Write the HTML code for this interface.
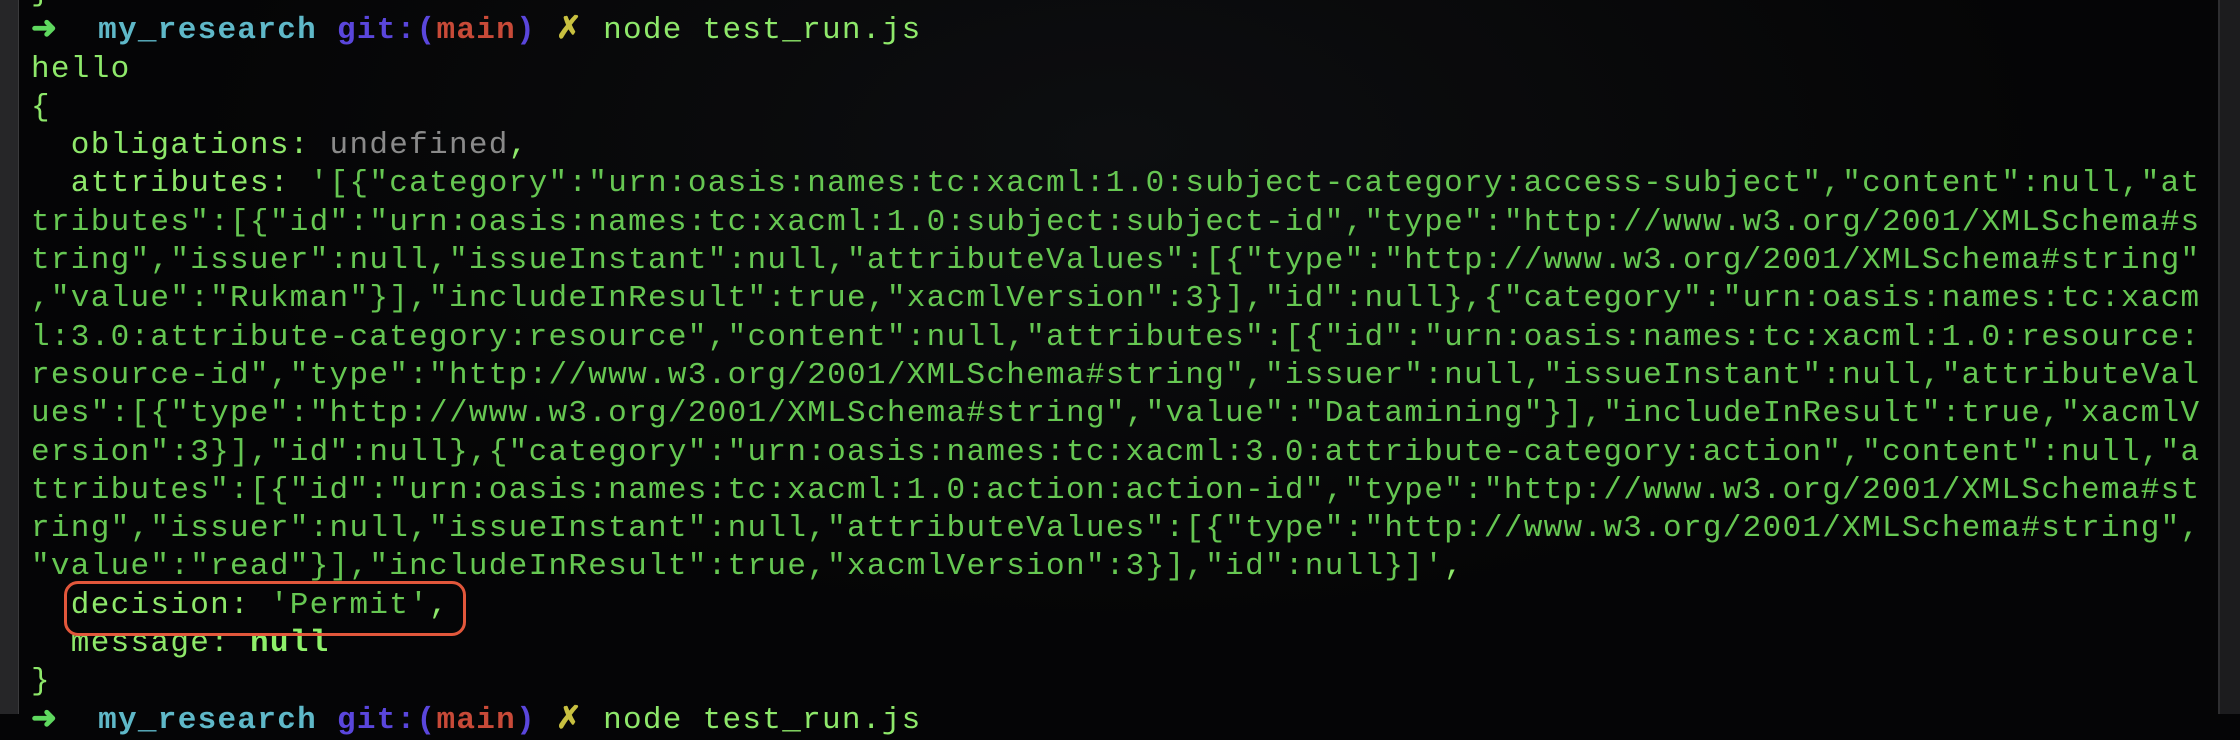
<!DOCTYPE html>
<html><head><meta charset="utf-8"><style>
html,body{margin:0;padding:0;width:2240px;height:714px;overflow:hidden;background:#050506;}
.lstrip{position:absolute;left:0;top:0;width:18px;height:714px;background:#262628;border-right:1px solid #3a3a3c;}
.rstrip{position:absolute;left:2218px;top:0;width:22px;height:714px;background:#1c1c1e;border-left:2px solid #2e2e30;}
.term{position:absolute;left:19px;top:0;width:2199px;height:714px;background:radial-gradient(ellipse at 50% 20%,#0d0e10 0%,#050506 60%);}
pre{position:absolute;left:31px;top:-26px;margin:0;font-family:"Liberation Mono",monospace;font-size:31px;letter-spacing:1.3px;line-height:38.3px;color:#8ee86a;white-space:pre;}
.g{color:#66c752}.u{color:#8a8a8a}.n{color:#8ef06a;font-weight:bold}
.ar{color:#5fd85f;font-weight:bold}.c{color:#5fb8c8;font-weight:bold}.b{color:#5a46dc;font-weight:bold}.r{color:#c84a38;font-weight:bold}.y{color:#c8c040;font-weight:bold}
.box{position:absolute;left:64px;top:581px;width:396px;height:49px;border:3px solid #e2573b;border-radius:14px;}
</style></head><body>
<div class="term"></div>
<div class="lstrip"></div>
<div class="rstrip"></div>
<pre>}
<span class="ar">➜</span>  <span class="c">my_research</span> <span class="b">git:(</span><span class="r">main</span><span class="b">)</span> <span class="y">✗</span> node test_run.js
hello
{
  obligations: <span class="u">undefined</span>,
  attributes: <span class="g">'[{"category":"urn:oasis:names:tc:xacml:1.0:subject-category:access-subject","content":null,"at</span>
<span class="g">tributes":[{"id":"urn:oasis:names:tc:xacml:1.0:subject:subject-id","type":"http://www.w3.org/2001/XMLSchema#s</span>
<span class="g">tring","issuer":null,"issueInstant":null,"attributeValues":[{"type":"http://www.w3.org/2001/XMLSchema#string"</span>
<span class="g">,"value":"Rukman"}],"includeInResult":true,"xacmlVersion":3}],"id":null},{"category":"urn:oasis:names:tc:xacm</span>
<span class="g">l:3.0:attribute-category:resource","content":null,"attributes":[{"id":"urn:oasis:names:tc:xacml:1.0:resource:</span>
<span class="g">resource-id","type":"http://www.w3.org/2001/XMLSchema#string","issuer":null,"issueInstant":null,"attributeVal</span>
<span class="g">ues":[{"type":"http://www.w3.org/2001/XMLSchema#string","value":"Datamining"}],"includeInResult":true,"xacmlV</span>
<span class="g">ersion":3}],"id":null},{"category":"urn:oasis:names:tc:xacml:3.0:attribute-category:action","content":null,"a</span>
<span class="g">ttributes":[{"id":"urn:oasis:names:tc:xacml:1.0:action:action-id","type":"http://www.w3.org/2001/XMLSchema#st</span>
<span class="g">ring","issuer":null,"issueInstant":null,"attributeValues":[{"type":"http://www.w3.org/2001/XMLSchema#string",</span>
<span class="g">"value":"read"}],"includeInResult":true,"xacmlVersion":3}],"id":null}]'</span>,
  decision: <span class="g">'Permit'</span>,
  message: <span class="n">null</span>
}
<span class="ar">➜</span>  <span class="c">my_research</span> <span class="b">git:(</span><span class="r">main</span><span class="b">)</span> <span class="y">✗</span> node test_run.js</pre>
<div class="box"></div>
</body></html>
